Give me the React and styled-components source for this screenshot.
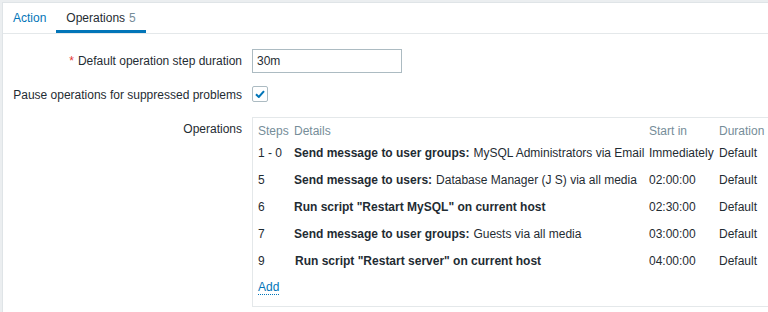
import { Fragment } from 'react';
import styled, { createGlobalStyle } from 'styled-components';

const GlobalStyle = createGlobalStyle`
  html, body {
    margin: 0;
    padding: 0;
    background: #ebeef0;
    overflow: hidden;
  }
  body {
    font-family: "Liberation Sans", Arial, sans-serif;
    font-size: 12px;
    color: #1f2c33;
  }
`;

const Panel = styled.div`
  margin: 2px 0 0 2px;
  height: 310px;
  background: #ffffff;
  border-left: 1px solid #dfe4e7;
  border-top: 1px solid #dfe4e7;
`;

const TabBar = styled.div`
  display: flex;
  height: 30px;
  border-bottom: 1px solid #e4e8ea;
`;

const Tab = styled.div`
  padding: 0 10px;
  line-height: 30px;
  color: ${({ active }) => (active ? '#1f2c33' : '#0275b8')};
  box-shadow: ${({ active }) => (active ? 'inset 0 -3px 0 #0275b8' : 'none')};
  white-space: nowrap;
`;

const Count = styled.span`
  color: #768d99;
  margin-left: 4px;
`;

const Form = styled.div`
  display: grid;
  grid-template-columns: 249px 1fr;
  row-gap: 10px;
  padding-top: 15px;
`;

const Label = styled.div`
  display: flex;
  align-items: ${({ top }) => (top ? 'flex-start' : 'center')};
  justify-content: flex-end;
  padding-right: 10px;
  padding-top: ${({ top }) => (top ? '5px' : '0')};
  min-height: 24px;
  white-space: nowrap;
`;

const Asterisk = styled.span`
  color: #e33734;
  margin-right: 4px;
`;

const Field = styled.div`
  display: flex;
  align-items: center;
  min-height: 24px;
`;

const Input = styled.input`
  box-sizing: border-box;
  width: 150px;
  height: 24px;
  padding: 0 4px;
  border: 1px solid #acbbc2;
  border-radius: 0;
  font-family: inherit;
  font-size: 12px;
  color: #1f2c33;
  outline: none;
`;

const Checkbox = styled.span`
  box-sizing: border-box;
  display: flex;
  align-items: center;
  justify-content: center;
  width: 16px;
  height: 16px;
  border: 1px solid #acbbc2;
  border-radius: 2px;
  margin-top: -2px;
`;

const OpsBox = styled.div`
  box-sizing: border-box;
  width: 520px;
  height: 190px;
  border: 1px solid #e4e8ea;
  padding: 4px 5px 6px;
`;

const OpsGrid = styled.div`
  display: grid;
  grid-template-columns: 36px 355px 70px auto;
`;

const Cell = styled.div`
  display: flex;
  align-items: center;
  height: ${({ head }) => (head ? '17px' : '26.8px')};
  margin-bottom: ${({ head }) => (head ? '1px' : '0')};
  color: ${({ head }) => (head ? '#768d99' : '#1f2c33')};
  white-space: nowrap;
  padding-left: ${({ shift }) => (shift ? '1px' : '0')};
`;

const Strong = styled.b`
  font-weight: bold;
  margin-right: 4px;
`;

const AddRow = styled.div`
  display: flex;
  align-items: center;
  height: 28px;
`;

const AddLink = styled.a`
  color: #0275b8;
  text-decoration: none;
  border-bottom: 1px dotted #0275b8;
  line-height: 13px;
  cursor: pointer;
`;

const operations = [
  { step: '1 - 0', bold: 'Send message to user groups:', rest: 'MySQL Administrators via Email', start: 'Immediately' },
  { step: '5', bold: 'Send message to users:', rest: 'Database Manager (J S) via all media', start: '02:00:00' },
  { step: '6', bold: 'Run script "Restart MySQL" on current host', rest: '', start: '02:30:00' },
  { step: '7', bold: 'Send message to user groups:', rest: 'Guests via all media', start: '03:00:00' },
  { step: '9', bold: 'Run script "Restart server" on current host', rest: '', start: '04:00:00', shift: true },
];

function CheckMark() {
  return (
    <svg width="10" height="8" viewBox="0 0 10 8">
      <path d="M1 4.2 L3.8 7 L9 1.2" fill="none" stroke="#0275b8" strokeWidth="2" />
    </svg>
  );
}

export default function App() {
  return (
    <>
      <GlobalStyle />
      <Panel>
        <TabBar>
          <Tab>Action</Tab>
          <Tab active>
            Operations
            <Count>5</Count>
          </Tab>
        </TabBar>
        <Form>
          <Label>
            <Asterisk>*</Asterisk>
            Default operation step duration
          </Label>
          <Field>
            <Input defaultValue="30m" />
          </Field>

          <Label>Pause operations for suppressed problems</Label>
          <Field>
            <Checkbox>
              <CheckMark />
            </Checkbox>
          </Field>

          <Label top>Operations</Label>
          <OpsBox>
            <OpsGrid>
              <Cell head>Steps</Cell>
              <Cell head>Details</Cell>
              <Cell head>Start in</Cell>
              <Cell head>Duration</Cell>
              {operations.map((op) => (
                <Fragment key={op.step}>
                  <Cell>{op.step}</Cell>
                  <Cell shift={op.shift}>
                    <Strong>{op.bold}</Strong>
                    {op.rest}
                  </Cell>
                  <Cell>{op.start}</Cell>
                  <Cell>Default</Cell>
                </Fragment>
              ))}
            </OpsGrid>
            <AddRow>
              <AddLink>Add</AddLink>
            </AddRow>
          </OpsBox>
        </Form>
      </Panel>
    </>
  );
}
